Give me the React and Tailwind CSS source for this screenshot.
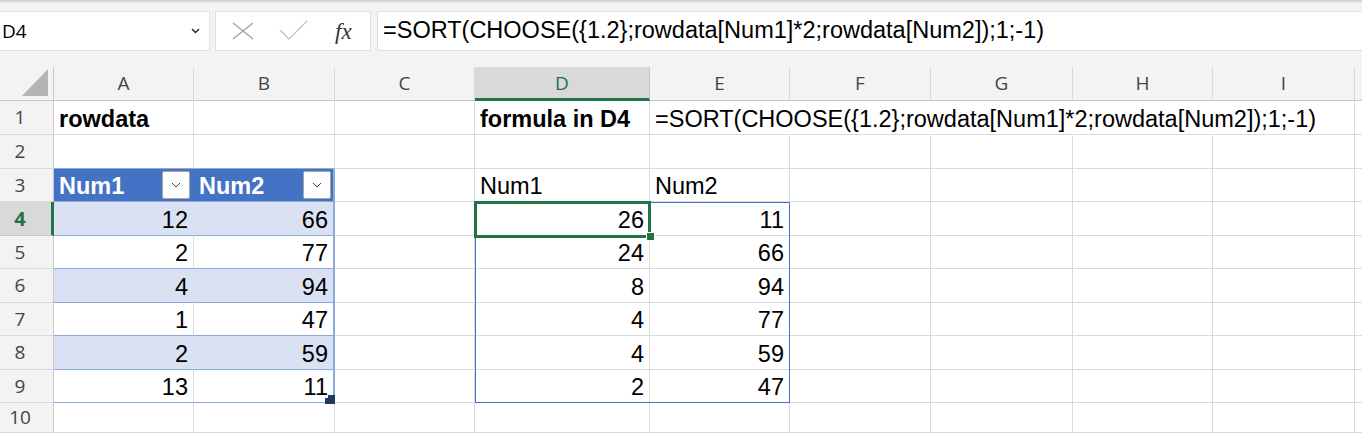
import React from 'react';

const FORMULA = '=SORT(CHOOSE({1.2};rowdata[Num1]*2;rowdata[Num2]);1;-1)';

const cols = [
    { id: 'A', w: 'w-[140px]' },
    { id: 'B', w: 'w-[141px]' },
    { id: 'C', w: 'w-[140px]' },
    { id: 'D', w: 'w-[175px]' },
    { id: 'E', w: 'w-[140px]' },
    { id: 'F', w: 'w-[141px]' },
    { id: 'G', w: 'w-[142px]' },
    { id: 'H', w: 'w-[140px]' },
    { id: 'I', w: 'w-[142px]' },
];

const rowHeights = ['h-[34px]', 'h-[34px]', 'h-[33px]', 'h-[34px]', 'h-[33px]', 'h-[34px]', 'h-[33px]', 'h-[34px]', 'h-[33px]', 'h-[30px]'];

const colA = [12, 2, 4, 1, 2, 13];
const colB = [66, 77, 94, 47, 59, 11];
const colD = [26, 24, 8, 4, 4, 2];
const colE = [11, 66, 94, 77, 59, 47];

const GRID_R = 'border-r border-r-[#dadada]';
const GRID_B = 'border-b border-b-[#dadada]';
const NONE_R = 'border-r border-r-transparent';
const TBL_B = 'border-b border-b-[#8ea9db]';
const TBL_R = 'border-r-2 border-r-[#8ea9db]';
const BAND_R = 'border-r border-r-[#d9e1f2]';
const HEAD_R = 'border-r border-r-[#4472c4]';

const Cell = ({ w, r = GRID_R, b = GRID_B, bg = '', className = '', children }) => (
    <div className={`${w} shrink-0 h-full ${r} ${b} ${bg} flex items-end px-[5px] pb-[3px] whitespace-nowrap ${className}`}>
        {children}
    </div>
);

const FilterButton = () => (
    <div className="self-end mb-[-1px] ml-auto w-[28px] h-[28px] bg-white border border-[#a6a6a6] rounded-[2px] flex items-center justify-center">
        <svg width="10" height="6" viewBox="0 0 10 6">
            <path d="M1 1l4 4 4-4" fill="none" stroke="#444" strokeWidth="1" />
        </svg>
    </div>
);

const renderCell = (col, rowIdx) => {
    const n = rowIdx + 1;
    const { id, w } = col;
    const key = id + n;

    if (n === 1) {
        if (id === 'A') return <Cell key={key} w={w}><span className="font-bold">rowdata</span></Cell>;
        if (id === 'D') return <Cell key={key} w={w}><span className="font-bold">formula in D4</span></Cell>;
        if (id === 'E') return <Cell key={key} w={w} r={NONE_R}><span>{FORMULA}</span></Cell>;
        if (id === 'F' || id === 'G' || id === 'H') return <Cell key={key} w={w} r={NONE_R} />;
    }
    if (n === 2 && (id === 'A' || id === 'B')) return <Cell key={key} w={w} b={TBL_B} />;
    if (n === 3) {
        if (id === 'A') return (
            <Cell key={key} w={w} r={HEAD_R} b={TBL_B} bg="bg-[#4472c4]" className="pr-[3px]">
                <span className="font-bold text-white">Num1</span>
                <FilterButton />
            </Cell>
        );
        if (id === 'B') return (
            <Cell key={key} w={w} r={TBL_R} b={TBL_B} bg="bg-[#4472c4]" className="pr-[2px]">
                <span className="font-bold text-white">Num2</span>
                <FilterButton />
            </Cell>
        );
        if (id === 'D') return <Cell key={key} w={w}>Num1</Cell>;
        if (id === 'E') return <Cell key={key} w={w}>Num2</Cell>;
    }
    if (n >= 4 && n <= 9) {
        const i = n - 4;
        const band = i % 2 === 0;
        if (id === 'A') return (
            <Cell key={key} w={w} r={band ? BAND_R : GRID_R} b={TBL_B} bg={band ? 'bg-[#d9e1f2]' : ''} className="justify-end">
                {colA[i]}
            </Cell>
        );
        if (id === 'B') return (
            <Cell key={key} w={w} r={TBL_R} b={TBL_B} bg={band ? 'bg-[#d9e1f2]' : ''} className={`justify-end ${n === 9 ? 'relative' : ''}`}>
                {colB[i]}
                {n === 9 && (
                    <svg className="absolute right-[-2px] bottom-[-2px] z-10" width="10" height="9" viewBox="0 0 10 9">
                        <polygon points="3,0 10,0 10,9 0,9 0,3 3,3" fill="#1f3864" />
                    </svg>
                )}
            </Cell>
        );
        if (id === 'D') return (
            <Cell key={key} w={w} className={`justify-end ${n === 4 ? 'relative' : ''}`}>
                {colD[i]}
                {n === 4 && (
                    <>
                        <div className="absolute left-0 top-0 w-[315px] h-[201px] border border-[#4472c4] z-10 pointer-events-none" />
                        <div className="absolute left-[-1px] top-[-1px] w-[177px] h-[37px] border-[3px] border-[#217346] z-20 pointer-events-none" />
                        <div className="absolute left-[171px] top-[30px] w-[9px] h-[9px] bg-[#217346] border border-white z-30" />
                    </>
                )}
            </Cell>
        );
        if (id === 'E') return <Cell key={key} w={w} className="justify-end">{colE[i]}</Cell>;
    }
    return <Cell key={key} w={w} />;
};

const FormulaBar = () => (
    <div className="h-[67px] bg-[#f3f3f3] flex flex-col">
        <div className="h-[3px] bg-gradient-to-b from-[#cdcdcd] to-[#ececec]" />
        <div className="flex mt-[8px] h-[40px]">
            <div className="w-[210px] h-full bg-white border border-l-0 border-[#e1e1e1] flex items-center pl-[2px] pr-[9px] font-['Open_Sans',sans-serif] text-[19px] text-black">
                <span>D4</span>
                <svg className="ml-auto" width="9" height="6" viewBox="0 0 9 6">
                    <path d="M1 1l3.5 3.5L8 1" fill="none" stroke="#222" strokeWidth="1.4" />
                </svg>
            </div>
            <div className="ml-[5px] w-[156px] h-full bg-white border border-[#e1e1e1] flex items-center">
                <svg className="ml-[16px]" width="22" height="18" viewBox="0 0 22 18">
                    <path d="M1 1l20 16M21 1L1 17" fill="none" stroke="#a3a3a3" strokeWidth="1.4" />
                </svg>
                <svg className="ml-[25px] mb-[2px]" width="29" height="20" viewBox="0 0 29 20">
                    <path d="M1 10l9 9L28 1" fill="none" stroke="#c4c4c4" strokeWidth="1.4" />
                </svg>
                <span className="ml-[27px] font-['Liberation_Serif',serif] italic text-[23px] text-[#333] leading-none">fx</span>
            </div>
            <div className="ml-[6px] flex-1 h-full bg-white border border-r-0 border-[#e1e1e1] flex items-center pl-[5px] text-[23.5px] text-black whitespace-nowrap">
                {FORMULA}
            </div>
        </div>
    </div>
);

const App = () => {
    return (
        <div className="w-[1362px] h-[433px] overflow-hidden bg-white font-['Liberation_Sans',Arial,sans-serif] text-black">
            <FormulaBar />

            {/* column headers */}
            <div className="flex h-[34px] bg-[#f3f3f3] font-['Open_Sans',sans-serif] text-[19px] text-[#444]">
                <div className="w-[54px] shrink-0 h-full border-r border-r-[#c8c8c8] border-b border-b-[#c8c8c8] pl-[22px] pt-[2px]">
                    <svg width="26" height="27" viewBox="0 0 26 27">
                        <polygon points="26,0 26,27 0,27" fill="#b4b4b4" />
                    </svg>
                </div>
                {cols.map((c) => (
                    c.id === 'D' ? (
                        <div key={c.id} className={`${c.w} shrink-0 h-full bg-[#d9d9d9] border-r border-r-[#c8c8c8] border-b-[3px] border-b-[#217346] flex items-center justify-center pt-[2px] text-[#217346]`}>
                            {c.id}
                        </div>
                    ) : (
                        <div key={c.id} className={`${c.w} shrink-0 h-full border-r border-r-[#dadada] border-b border-b-[#c8c8c8] flex items-center justify-center`}>
                            {c.id}
                        </div>
                    )
                ))}
                <div className="flex-1 h-full border-b border-b-[#c8c8c8]" />
            </div>

            {/* rows */}
            <div className="text-[23.5px] leading-[23px]">
                {rowHeights.map((h, idx) => (
                    <div key={idx} className={`flex ${h}`}>
                        {idx === 3 ? (
                            <div className="w-[54px] shrink-0 h-full bg-[#d9d9d9] border-r-[3px] border-r-[#217346] border-b border-b-[#c8c8c8] flex items-center justify-center pr-[11px] font-['Open_Sans',sans-serif] text-[20px] font-bold text-[#217346]">
                                {idx + 1}
                            </div>
                        ) : (
                            <div className="w-[54px] shrink-0 h-full bg-[#f3f3f3] border-r border-r-[#c8c8c8] border-b border-b-[#dadada] flex items-center justify-center pr-[13px] font-['Open_Sans',sans-serif] text-[19px] text-[#444]">
                                {idx + 1}
                            </div>
                        )}
                        {cols.map((c) => renderCell(c, idx))}
                        <div className="flex-1 h-full border-b border-b-[#dadada]" />
                    </div>
                ))}
            </div>
        </div>
    );
};

export default App;
